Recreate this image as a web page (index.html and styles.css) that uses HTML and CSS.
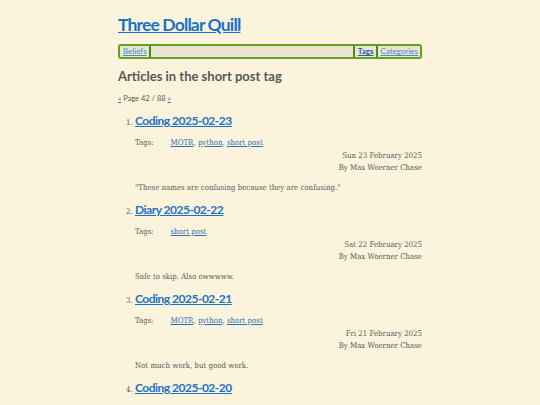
FILE: index.html
```html
<!DOCTYPE html>
<html>
<head>
<meta charset="utf-8">
<link rel="stylesheet" href="styles.css">
</head>
<body>
<div class="page">
  <header class="site-header">
    <h1 class="site-title"><a href="#">Three Dollar Quill</a></h1>
    <nav class="nav">
      <a href="#" class="nav-link">Beliefs</a><span class="sep"></span>
      <span class="nav-fill"></span>
      <span class="sep"></span><a href="#" class="nav-link current">Tags</a><span class="sep"></span><a href="#" class="nav-link">Categories</a>
    </nav>
  </header>
  <h2 class="page-heading">Articles in the short post tag</h2>
  <p class="pager"><a href="#">«</a> Page 42 / 88 <a href="#">»</a></p>
  <ol class="articles">
    <li class="article">
      <h3 class="article-title"><a href="#">Coding 2025-02-23</a></h3>
      <div class="tags"><span class="tags-label">Tags:</span><span class="tags-list"><a href="#">MOTR</a>, <a href="#">python</a>, <a href="#">short post</a></span></div>
      <div class="meta"><div>Sun 23 February 2025</div><div>By Max Woerner Chase</div></div>
      <p class="summary">"These names are confusing because they are confusing."</p>
    </li>
    <li class="article">
      <h3 class="article-title"><a href="#">Diary 2025-02-22</a></h3>
      <div class="tags"><span class="tags-label">Tags:</span><span class="tags-list"><a href="#">short post</a></span></div>
      <div class="meta"><div>Sat 22 February 2025</div><div>By Max Woerner Chase</div></div>
      <p class="summary">Safe to skip. Also owwwww.</p>
    </li>
    <li class="article">
      <h3 class="article-title"><a href="#">Coding 2025-02-21</a></h3>
      <div class="tags"><span class="tags-label">Tags:</span><span class="tags-list"><a href="#">MOTR</a>, <a href="#">python</a>, <a href="#">short post</a></span></div>
      <div class="meta"><div>Fri 21 February 2025</div><div>By Max Woerner Chase</div></div>
      <p class="summary">Not much work, but good work.</p>
    </li>
    <li class="article">
      <h3 class="article-title"><a href="#">Coding 2025-02-20</a></h3>
      <div class="tags"><span class="tags-label">Tags:</span><span class="tags-list"><a href="#">MOTR</a>, <a href="#">python</a>, <a href="#">short post</a></span></div>
      <div class="meta"><div>Thu 20 February 2025</div><div>By Max Woerner Chase</div></div>
      <p class="summary">More work.</p>
    </li>
  </ol>
</div>
</body>
</html>
```

FILE: styles.css
```css
html, body {
  margin: 0;
  padding: 0;
  background: #fcf3dc;
}
body {
  font-family: "DejaVu Serif Condensed", "DejaVu Serif", serif;
  font-stretch: semi-condensed;
  font-size: 7.8px;
  color: #5a5a5a;
}
a {
  color: #2d70b6;
}
.page {
  width: 304px;
  margin: 0 auto;
  padding-top: 14px;
}
.site-title {
  margin: 0;
  font-family: "Lato", "Open Sans", sans-serif;
  font-weight: 700;
  font-size: 17.5px;
  letter-spacing: -0.85px;
  line-height: 22px;
}
.site-title a {
  color: #1a72c8;
}
.nav {
  display: flex;
  align-items: stretch;
  margin-top: 8px;
  height: 11px;
  border: 2px solid #62a022;
  border-radius: 3px;
  background: #ebe5d3;
  font-family: "Lato", sans-serif;
  font-stretch: normal;
  font-size: 8px;
  line-height: 11px;
}
.nav-link {
  padding: 0 2px 0 3px;
  color: #4a89cc;
}
.nav-link.current {
  font-weight: 700;
  color: #1f63a6;
}
.sep {
  width: 2px;
  background: #4c8a18;
}
.nav-fill {
  flex: 1;
}
.page-heading {
  margin: 8px 0 0;
  font-family: "Lato", sans-serif;
  font-stretch: normal;
  font-weight: 700;
  font-size: 13px;
  line-height: 18px;
  color: #585858;
}
.pager {
  margin: 9px 0 0;
  font-family: "Lato", sans-serif;
  font-stretch: normal;
  font-size: 7.5px;
  line-height: 10px;
}
.articles {
  margin: 9px 0 0;
  padding-left: 17px;
}
.article-title {
  margin: 0;
  font-family: "Lato", sans-serif;
  font-stretch: normal;
  font-weight: 700;
  font-size: 12px;
  letter-spacing: -0.5px;
  line-height: 16px;
}
.article-title a {
  color: #1a72c8;
}
.tags {
  display: flex;
  margin-top: 8px;
  line-height: 12px;
}
.tags-label {
  width: 35.5px;
}
.meta {
  text-align: right;
  line-height: 12px;
  margin-top: 1px;
}
.summary {
  margin: 8px 0;
  line-height: 12px;
}
```
